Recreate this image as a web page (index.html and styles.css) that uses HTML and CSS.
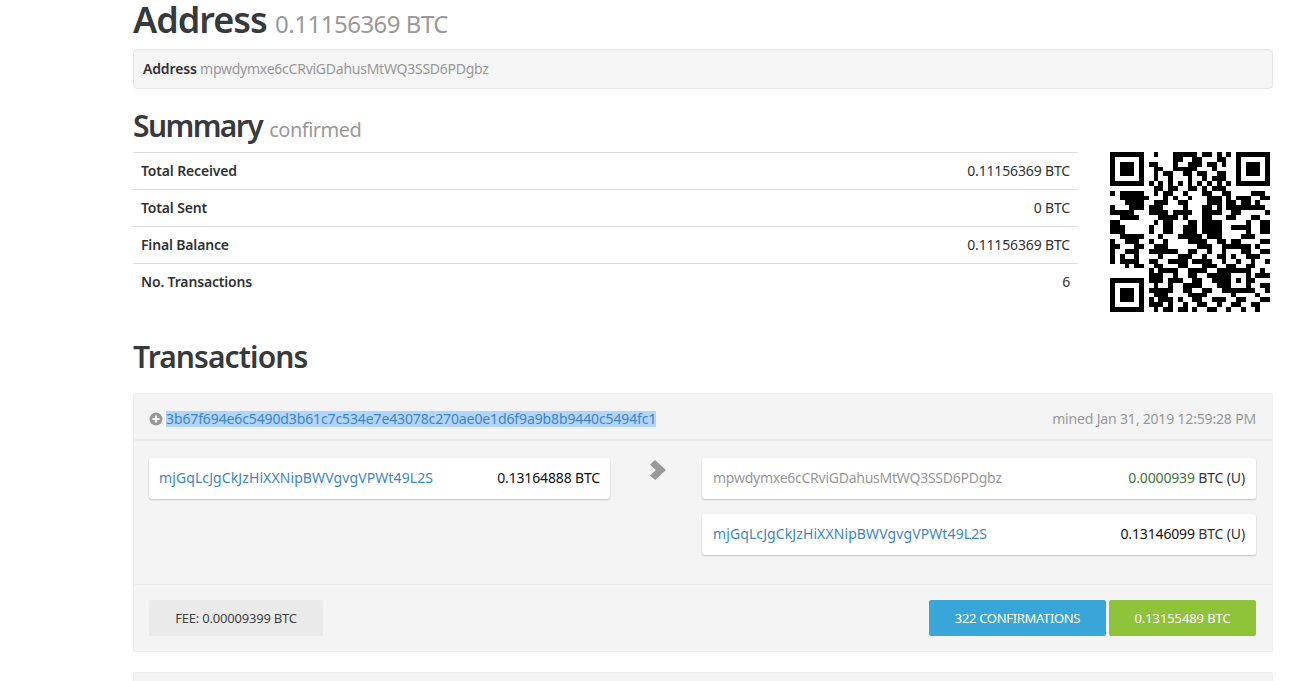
FILE: index.html
```html
<!DOCTYPE html>
<html lang="en">
<head>
<meta charset="utf-8">
<title>Address</title>
<link rel="stylesheet" href="styles.css">
</head>
<body>
<main class="page">
  <h1 class="title">Address <small class="title-sub">0.11156369 BTC</small></h1>
  <div class="well"><strong>Address</strong> <span class="muted">mpwdymxe6cCRviGDahusMtWQ3SSD6PDgbz</span></div>

  <h2 class="section summary-title">Summary <small class="section-sub">confirmed</small></h2>
  <div class="summary">
    <table class="stats">
      <tr><th>Total Received</th><td>0.11156369 BTC</td></tr>
      <tr><th>Total Sent</th><td>0 BTC</td></tr>
      <tr><th>Final Balance</th><td>0.11156369 BTC</td></tr>
      <tr><th>No. Transactions</th><td>6</td></tr>
    </table>
    <svg class="qr" viewBox="0 0 33 33" aria-label="QR code">
      <path class="qr-path" d="M0 .5h7M9 .5h1M13 .5h5M19 .5h2M22 .5h1M24 .5h1M26 .5h7
      M0 1.5h1M6 1.5h1M13 1.5h2M17 1.5h2M22 1.5h2M26 1.5h1M32 1.5h1
      M0 2.5h1M2 2.5h3M6 2.5h1M8 2.5h2M13 2.5h1M16 2.5h3M20 2.5h2M23 2.5h1M26 2.5h1M28 2.5h3M32 2.5h1
      M0 3.5h1M2 3.5h3M6 3.5h1M9 3.5h2M13 3.5h5M21 3.5h1M26 3.5h1M28 3.5h3M32 3.5h1
      M0 4.5h1M2 4.5h3M6 4.5h1M9 4.5h1M11 4.5h2M15 4.5h2M18 4.5h2M22 4.5h2M26 4.5h1M28 4.5h3M32 4.5h1
      M0 5.5h1M6 5.5h1M9 5.5h1M12 5.5h1M16 5.5h1M19 5.5h1M21 5.5h3M26 5.5h1M32 5.5h1
      M0 6.5h7M8 6.5h1M10 6.5h1M12 6.5h1M14 6.5h1M16 6.5h1M18 6.5h1M20 6.5h1M22 6.5h1M24 6.5h1M26 6.5h7
      M9 7.5h2M12 7.5h2M16 7.5h2M19 7.5h1M21 7.5h2M23 7.5h1
      M0 8.5h1M2 8.5h5M9 8.5h1M11 8.5h2M15 8.5h1M19 8.5h2M23 8.5h2M29 8.5h3
      M2 9.5h6M11 9.5h1M13 9.5h1M16 9.5h1M20 9.5h3M24 9.5h1M26 9.5h3M31 9.5h2
      M3 10.5h4M9 10.5h3M14 10.5h2M20 10.5h3M24 10.5h2M27 10.5h2M30 10.5h1
      M0 11.5h1M4 11.5h3M8 11.5h3M15 11.5h1M19 11.5h2M22 11.5h1M24 11.5h8
      M0 12.5h5M8 12.5h4M13 12.5h4M19 12.5h4M25 12.5h2M32 12.5h1
      M2 13.5h4M10 13.5h4M15 13.5h1M19 13.5h2M24 13.5h2M29 13.5h2
      M0 14.5h2M9 14.5h1M11 14.5h2M16 14.5h2M19 14.5h4M28 14.5h1M31 14.5h2
      M0 15.5h3M8 15.5h1M11 15.5h2M15 15.5h3M19 15.5h4M25 15.5h4M31 15.5h2
      M0 16.5h3M8 16.5h1M11 16.5h2M15 16.5h3M19 16.5h4M28 16.5h1M31 16.5h2
      M2 17.5h5M10 17.5h1M14 17.5h5M20 17.5h3M27 17.5h3
      M0 18.5h1M3 18.5h3M8 18.5h1M11 18.5h1M16 18.5h4M22 18.5h2M25 18.5h2M31 18.5h2
      M0 19.5h2M5 19.5h2M9 19.5h3M18 19.5h3M23 19.5h6M30 19.5h1
      M0 20.5h1M3 20.5h3M8 20.5h6M16 20.5h2M20 20.5h1M23 20.5h1M27 20.5h2M31 20.5h2
      M0 21.5h1M2 21.5h1M5 21.5h1M10 21.5h1M14 21.5h3M19 21.5h1M22 21.5h2M25 21.5h1M28 21.5h3
      M0 22.5h1M2 22.5h4M8 22.5h2M12 22.5h4M17 22.5h4M23 22.5h1M26 22.5h1M29 22.5h1M32 22.5h1
      M3 23.5h1M5 23.5h2M9 23.5h2M14 23.5h2M19 23.5h3M24 23.5h2M28 23.5h2
      M8 24.5h1M10 24.5h4M16 24.5h4M22 24.5h7M31 24.5h1
      M8 25.5h3M13 25.5h1M16 25.5h2M20 25.5h4M24 25.5h1M28 25.5h1M30 25.5h3
      M0 26.5h7M8 26.5h3M12 26.5h3M17 26.5h2M21 26.5h3M24 26.5h1M26 26.5h1M28 26.5h2
      M0 27.5h1M6 27.5h1M9 27.5h1M12 27.5h1M15 27.5h4M22 27.5h3M28 27.5h1M31 27.5h2
      M0 28.5h1M2 28.5h3M6 28.5h1M8 28.5h5M15 28.5h2M19 28.5h2M23 28.5h7M32 28.5h1
      M0 29.5h1M2 29.5h3M6 29.5h1M9 29.5h3M16 29.5h4M25 29.5h1M30 29.5h1
      M0 30.5h1M2 30.5h3M6 30.5h1M8 30.5h1M10 30.5h3M14 30.5h1M17 30.5h2M21 30.5h3M26 30.5h2M31 30.5h2
      M0 31.5h1M6 31.5h1M8 31.5h3M12 31.5h1M15 31.5h1M18 31.5h2M22 31.5h1M25 31.5h2M29 31.5h2
      M0 32.5h7M9 32.5h1M11 32.5h2M14 32.5h2M17 32.5h1M20 32.5h2M24 32.5h1M27 32.5h1M30 32.5h1"/>
    </svg>
  </div>

  <h2 class="section tx-title">Transactions</h2>
  <section class="tx">
    <header class="tx-head">
      <div class="tx-id">
        <svg class="plus" viewBox="0 0 14 14"><circle cx="7" cy="7" r="6.5"/><path class="plus-mark" d="M3.5 7h7M7 3.5v7"/></svg>
        <a class="link hash">3b67f694e6c5490d3b61c7c534e7e43078c270ae0e1d6f9a9b8b9440c5494fc1</a>
      </div>
      <span class="mined">mined Jan 31, 2019 12:59:28 PM</span>
    </header>
    <div class="tx-body">
      <div class="side side-in">
        <div class="card"><a class="link">mjGqLcJgCkJzHiXXNipBWVgvgVPWt49L2S</a><span class="amount">0.13164888 BTC</span></div>
      </div>
      <div class="arrow-col">
        <svg class="arrow" viewBox="0 0 16 20"><path d="M5 0l11 10-11 10-5-4.600 6-5.400-6-5.400z"/></svg>
      </div>
      <div class="side side-out">
        <div class="card"><span class="muted">mpwdymxe6cCRviGDahusMtWQ3SSD6PDgbz</span><span class="amount"><span class="green">0.0000939</span> <span class="muted-dark">BTC (U)</span></span></div>
        <div class="card"><a class="link">mjGqLcJgCkJzHiXXNipBWVgvgVPWt49L2S</a><span class="amount">0.13146099 <span class="muted-dark">BTC (U)</span></span></div>
      </div>
    </div>
    <footer class="tx-foot">
      <span class="tag tag-fee">FEE: 0.00009399 BTC</span>
      <div class="tags">
        <span class="tag tag-conf">322 CONFIRMATIONS</span>
        <span class="tag tag-total">0.13155489 BTC</span>
      </div>
    </footer>
  </section>
  <section class="tx tx-next"></section>
</main>
</body>
</html>
```

FILE: styles.css
```css
* { box-sizing: border-box; }
html, body { margin: 0; height: 681px; overflow: hidden; background: #fff; }
body { font: 14px/20px "Noto Sans", "Open Sans", sans-serif; color: #333; }
.page { margin-left: 133px; width: 1140px; }
.title { margin: 0; font-size: 36px; line-height: 40px; font-weight: 600; color: #373a3c; height: 49px; letter-spacing: -1px; }
.title-sub { font-size: 24px; font-weight: 400; color: #999; letter-spacing: -.5px; }
.well { height: 40px; padding: 9px; background: #f5f5f5; border: 1px solid #e6e6e6; border-radius: 4px; font-size: 14px; letter-spacing: -.25px; box-shadow: inset 0 1px 1px rgba(0,0,0,.03); }
.well strong { color: #333; font-weight: 600; letter-spacing: -.15px; }
.muted { color: #999; }
.section { margin: 0; font-weight: 600; font-size: 30px; line-height: 33px; color: #373a3c; }
.summary-title { margin-top: 20px; height: 43px; letter-spacing: -1.6px; }
.tx-title { margin-top: 28px; height: 53px; letter-spacing: -.9px; }
.section-sub { font-size: 20px; font-weight: 400; color: #999; letter-spacing: -.5px; margin-left: 1px; }
.summary { display: flex; align-items: flex-start; }
.stats { width: 945px; border-collapse: collapse; font-size: 14px; }
.stats tr { height: 37px; border-top: 1px solid #ddd; }
.stats th { padding: 0 8px; text-align: left; font-weight: 600; letter-spacing: -.16px; }
.stats td { padding: 0 8px; text-align: right; letter-spacing: -.15px; }
.qr { display: block; width: 160px; height: 160px; margin-left: 32px; shape-rendering: crispEdges; }
.qr-path { fill: none; stroke: #000; stroke-width: 1; }
.tx { background: #f4f4f4; border: 1px solid #eee; border-radius: 2px; height: 259px; }
.tx-head { display: flex; align-items: center; justify-content: space-between; height: 47px; padding: 4px 16px 0 15px; border-bottom: 2px solid #ececec; }
.tx-id { display: flex; align-items: center; gap: 3px; }
.plus { width: 14px; height: 14px; fill: #999; }
.plus-mark { fill: none; stroke: #f4f4f4; stroke-width: 2.2; }
.link { color: #3f86c4; letter-spacing: .1px; }
.hash { background: #b3d4fc; line-height: 16px; letter-spacing: -.12px; }
.mined { color: #999; letter-spacing: -.17px; }
.tx-body { display: flex; height: 143px; padding: 17px 16px 0 15px; }
.side { display: flex; flex-direction: column; gap: 15px; }
.side-in { width: 461px; }
.side-out { width: 554px; }
.arrow-col { width: 92px; padding: 2px 0 0 40px; }
.arrow { display: block; width: 16px; height: 20px; fill: #999; }
.card { display: flex; align-items: center; justify-content: space-between; height: 41px; padding: 0 10px 2px; background: #fff; border-radius: 3px; box-shadow: 0 1px 2px rgba(0,0,0,.2); letter-spacing: -.25px; }
.side-out .card { padding: 0 11px 2px; }
.amount { color: #111; letter-spacing: -.15px; }
.green { color: #3c763d; }
.muted-dark { color: #333; }
.tx-foot { display: flex; align-items: flex-start; justify-content: space-between; height: 68px; padding: 15px 16px 0 15px; border-top: 1px solid #eaeaea; }
.tags { display: flex; gap: 3px; }
.tag { display: flex; align-items: center; justify-content: center; height: 36px; border-radius: 2px; font-size: 13px; letter-spacing: -.2px; }
.tag-fee { width: 174px; background: #eaeaea; color: #444; }
.tag-conf { width: 177px; background: #38a6d8; color: #fff; letter-spacing: -.33px; }
.tag-total { width: 147px; background: #8fc33a; color: #fff; letter-spacing: -.1px; }
.tx-next { margin-top: 20px; }
```
